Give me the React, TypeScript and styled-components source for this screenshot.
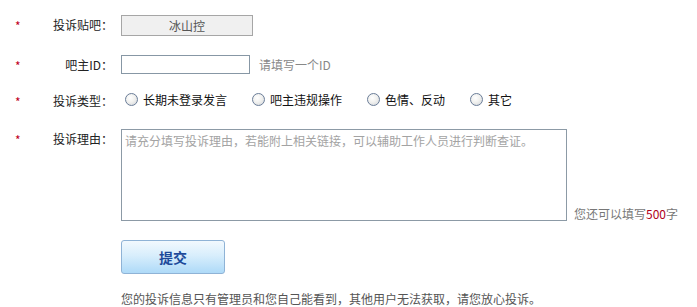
import styled, { createGlobalStyle } from "styled-components";

const GlobalStyle = createGlobalStyle`
  body {
    margin: 0;
    background: #fff;
    font-family: "Noto Sans CJK SC", "Liberation Sans", sans-serif;
    font-size: 12px;
    color: #333;
  }
`;

const reasons = ["长期未登录发言", "吧主违规操作", "色情、反动", "其它"];

function App() {
  return (
    <>
      <GlobalStyle />
      <Form>
        <Row $height={21} $gap={19}>
          <Star>*</Star>
          <Label>投诉贴吧：</Label>
          <ReadonlyBox>冰山控</ReadonlyBox>
        </Row>
        <Row $height={19} $gap={17}>
          <Star>*</Star>
          <Label>吧主ID：</Label>
          <TextInput type="text" />
          <Hint>请填写一个ID</Hint>
        </Row>
        <Row $height={18} $gap={20}>
          <Star>*</Star>
          <Label>投诉类型：</Label>
          <RadioGroup>
            {reasons.map((r) => (
              <RadioItem key={r}>
                <RadioDot />
                {r}
              </RadioItem>
            ))}
          </RadioGroup>
        </Row>
        <Row $height={92} $gap={19} $top>
          <Star>*</Star>
          <Label>投诉理由：</Label>
          <Reason placeholder="请充分填写投诉理由，若能附上相关链接，可以辅助工作人员进行判断查证。" />
          <Counter>
            您还可以填写<em>500</em>字
          </Counter>
        </Row>
        <Actions>
          <SubmitButton type="button">提交</SubmitButton>
        </Actions>
        <Notice>您的投诉信息只有管理员和您自己能看到，其他用户无法获取，请您放心投诉。</Notice>
      </Form>
    </>
  );
}

export default App;

const Form = styled.div`
  padding-top: 15px;
  width: 697px;
`;

const Row = styled.div<{ $height: number; $gap: number; $top?: boolean }>`
  display: flex;
  align-items: ${(p) => (p.$top ? "stretch" : "center")};
  height: ${(p) => p.$height}px;
  margin-bottom: ${(p) => p.$gap}px;
  line-height: 16px;
`;

const Star = styled.span`
  width: 44px;
  padding-left: 15px;
  box-sizing: border-box;
  color: #c0001e;
  font-size: 12px;
  align-self: flex-start;
  margin-top: 3px;
`;

const Label = styled.span`
  width: 69px;
  text-align: right;
  color: #222;
  margin-right: 8px;
  align-self: flex-start;
  margin-top: 2px;
`;

const ReadonlyBox = styled.div`
  width: 132px;
  height: 21px;
  box-sizing: border-box;
  border: 1px solid #a6a6a6;
  background: #f0f0f0;
  color: #555;
  text-align: center;
  line-height: 19px;
`;

const TextInput = styled.input`
  width: 129px;
  height: 19px;
  box-sizing: border-box;
  border: 1px solid #8797a5;
  padding: 0 3px;
  margin: 0;
  font: inherit;
  outline: none;
`;

const Hint = styled.span`
  margin-left: 9px;
  color: #888;
`;

const RadioGroup = styled.div`
  display: flex;
  align-items: center;
  gap: 25px;
  padding-left: 4px;
  margin-top: -1px;
`;

const RadioItem = styled.label`
  display: flex;
  align-items: center;
  gap: 5px;
  color: #111;
`;

const RadioDot = styled.span`
  width: 11px;
  height: 11px;
  border-radius: 50%;
  border: 1px solid #6a7d98;
  background: radial-gradient(circle at 40% 35%, #ffffff 0%, #f1f1ef 45%, #cfd3d8 100%);
`;

const Reason = styled.textarea`
  width: 446px;
  height: 92px;
  box-sizing: border-box;
  border: 1px solid #8c9aa6;
  padding: 2px 3px;
  margin: 0;
  resize: none;
  font: inherit;
  line-height: 17px;
  outline: none;
  &::placeholder {
    color: #a3a3a3;
  }
`;

const Counter = styled.span`
  align-self: flex-end;
  margin-left: 7px;
  margin-bottom: -1px;
  color: #777;
  em {
    font-style: normal;
    color: #b0001a;
  }
`;

const Actions = styled.div`
  padding-left: 121px;
  margin-bottom: 17px;
`;

const SubmitButton = styled.button`
  width: 104px;
  height: 34px;
  border: 1px solid #8fb3d6;
  border-radius: 3px;
  background: linear-gradient(to bottom, #f2f9fe 0%, #d8eefc 45%, #aedaf8 100%);
  color: #1d4a9a;
  font: inherit;
  font-size: 14px;
  font-weight: bold;
  cursor: pointer;
  padding: 0;
`;

const Notice = styled.p`
  margin: 0;
  padding-left: 121px;
  color: #555;
  line-height: 16px;
`;
